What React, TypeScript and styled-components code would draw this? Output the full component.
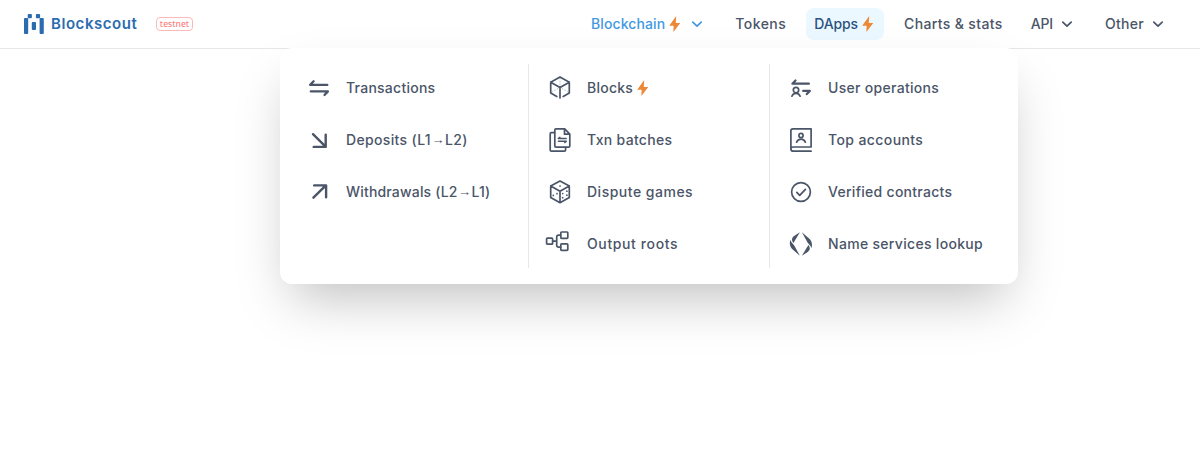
import React from 'react';
import styled, { createGlobalStyle, css } from 'styled-components';

const GlobalStyle = createGlobalStyle`
  *, *::before, *::after { box-sizing: border-box; }
  body {
    margin: 0;
    background: #fff;
    color: #4a5568;
    font-family: Inter, "Liberation Sans", sans-serif;
  }
`;

const Page = styled.div`
  min-height: 450px;
  overflow: hidden;
`;

const Header = styled.header`
  position: relative;
  display: flex;
  align-items: center;
  justify-content: space-between;
  height: 49px;
  padding: 0 24px 1px;
  border-bottom: 1px solid #e7e7e7;
`;

const Brand = styled.div`
  display: flex;
  align-items: center;
`;

const Wordmark = styled.span`
  width: 87px;
  margin-left: 7px;
  color: #2b6cb0;
  font-size: 15px;
  font-weight: 600;
  line-height: 20px;
  letter-spacing: 0.55px;
`;

const TestnetBadge = styled.span`
  display: flex;
  align-items: center;
  justify-content: center;
  width: 37px;
  height: 14px;
  margin-left: 18px;
  border: 1px solid #fdb9b9;
  border-radius: 4px;
  color: #fc8181;
  font-family: "Noto Sans", sans-serif;
  font-size: 8.6px;
  font-weight: 500;
  line-height: 12px;
`;

const Nav = styled.nav`
  display: flex;
  gap: 12px;
`;

const NavItem = styled.a<{ $variant?: 'open' | 'highlight' }>`
  display: flex;
  align-items: center;
  height: 32px;
  padding: 0 8px;
  border-radius: 8px;
  ${({ $variant }) => $variant === 'open' && css`color: #4299e1;`}
  ${({ $variant }) => $variant === 'highlight' && css`
    color: #2c5282;
    background: #ebf8ff;
  `}
`;

const Label = styled.span<{ $tracking?: number }>`
  font-size: 14px;
  font-weight: 500;
  line-height: 20px;
  letter-spacing: ${({ $tracking = 0.4 }) => $tracking}px;
  white-space: nowrap;
`;

const LayerArrow = styled.span`
  display: inline-block;
  width: 14px;
  font-family: "Liberation Sans", sans-serif;
  font-size: 13px;
  font-weight: 400;
  line-height: 1;
  letter-spacing: 0;
  text-align: center;
  vertical-align: 1px;
`;

const Menu = styled.div`
  position: absolute;
  top: 48px;
  left: 280px;
  display: grid;
  grid-template-columns: 232px 241px 233px;
  width: 738px;
  padding: 16px;
  border-radius: 12px;
  background: #fff;
  box-shadow: 0 25px 50px -12px rgba(0, 0, 0, 0.25);
`;

const MenuColumn = styled.ul`
  display: flex;
  flex-direction: column;
  gap: 4px;
  margin: 0;
  padding: 0;
  list-style: none;
  & + & {
    padding-left: 8px;
    border-left: 1px solid #e7e7e7;
  }
`;

const MenuItem = styled.li`
  display: flex;
  align-items: center;
  height: 48px;
  padding-left: 8px;
`;

const MenuIcon = styled.svg`
  flex: none;
  width: 30px;
  height: 30px;
  margin-right: 12px;
  fill: none;
  stroke: currentColor;
  stroke-width: 1.7;
  stroke-linecap: round;
  stroke-linejoin: round;
`;

const BoltSvg = styled.svg`
  flex: none;
  width: 18px;
  height: 18px;
  fill: #ed8936;
`;

const ChevronSvg = styled.svg`
  flex: none;
  width: 20px;
  height: 20px;
  margin-left: 4px;
  fill: none;
  stroke: currentColor;
  stroke-width: 1.7;
  stroke-linecap: round;
  stroke-linejoin: round;
`;

const Bolt = () => (
  <BoltSvg viewBox="0 0 18 18">
    <path d="M11.2 1 4.2 10.7h4.4L8.4 17 15.3 8h-4.5z" />
  </BoltSvg>
);

const Chevron = () => (
  <ChevronSvg viewBox="0 0 20 20">
    <path d="M5.8 8.1 10 12.2l4.2-4.1" />
  </ChevronSvg>
);

const Logo = () => (
  <svg width="20" height="20" viewBox="0 0 20 20" fill="#2b6cb0">
    <rect x="0" y="4" width="4.2" height="16" rx="0.9" />
    <rect x="3.7" y="0" width="4.2" height="4.2" rx="0.9" />
    <rect x="11.9" y="0" width="4.2" height="4.2" rx="0.9" />
    <rect x="15.6" y="4" width="4.2" height="16" rx="0.9" />
    <rect x="7.8" y="8" width="4.2" height="8" rx="0.9" />
  </svg>
);

const icons = {
  transactions: <path strokeWidth="2.3" d="M23.3 11.9H6.2l3.4-3.6M6.8 18.4h17.1l-3.4 3.6" />,
  deposits: <path strokeWidth="2.4" d="m9 9.2 12.3 12.2M9.7 21.9h12V9.6" />,
  withdrawals: <path strokeWidth="2.4" d="M9.4 20.7 21.6 8.6M10.2 8.4h11.9v11.8" />,
  blocks: (
    <>
      <path d="M11.8 23.5 5.7 20V9.2L15 4l9.3 5.2V20l-6.1 3.5M5.7 9.2 15 14.4l9.3-5.2M15 14.4V25" />
      <path strokeWidth="0.6" strokeDasharray="1 2" opacity="0.6" d="M15 5v7M7 19l6-3.5M23 19l-6-3.5" />
    </>
  ),
  batches: (
    <>
      <path d="M9.8 5.1c0-.7.5-1.2 1.2-1.2h8.7l5.1 5.2v11.8c0 .7-.5 1.2-1.2 1.2H11c-.7 0-1.2-.5-1.2-1.2zM19.5 4v5.2h5.2" />
      <path d="M9.5 7.7H6.4c-.7 0-1.2.5-1.2 1.2v16c0 .7.5 1.2 1.2 1.2h13c.7 0 1.2-.5 1.2-1.2v-2.4" />
      <path strokeWidth="1.4" d="M21.2 13.5h-8l1.7-1.3M13.4 16.3h8l-1.7 1.3" />
    </>
  ),
  dispute: (
    <>
      <path d="M15 3.9 24.3 9v11.5L15 25.7l-9.3-5.2V9zM5.7 9l9.3 5.3L24.3 9M15 14.3v11.2" />
      <path d="M15 9h.1M8.3 18.4h0M12 16.7h0M17.7 16.5h0M17.7 20.7h0M21.9 14.2h0M21.9 18.2h0" />
    </>
  ),
  roots: (
    <>
      <rect x="1.6" y="9.2" width="6" height="6" rx="0.8" />
      <rect x="15.8" y="3" width="7" height="6.4" rx="0.8" />
      <rect x="15.8" y="14.9" width="7" height="6.4" rx="0.8" />
      <path d="M7.8 12.2h4M15.6 6.2h-2c-1.1 0-1.9.8-1.9 1.9v8.1c0 1.1.8 1.9 1.9 1.9h2" />
    </>
  ),
  userOps: (
    <>
      <path strokeWidth="2.2" d="M22.9 10.7H6.4l3.1-3.2M17.2 17.9h6.6l-3 3.2" />
      <circle cx="10" cy="17.1" r="2.7" />
      <path d="M5.9 23.2c.7-1.9 2.1-2.9 4.1-2.9s3.4 1 4.1 2.9" />
    </>
  ),
  accounts: (
    <>
      <path d="M25.1 26.2H7.3c-1.4 0-2.4-1-2.4-2.3V5.8c0-1.1.9-2 2-2h18.2V22H7.3c-1.4 0-2.4.9-2.4 2" />
      <circle cx="15" cy="10.4" r="2.1" />
      <path d="M10.6 17.2c.8-2 2.3-3.1 4.4-3.1s3.6 1.1 4.4 3.1" />
    </>
  ),
  verified: (
    <>
      <circle cx="15" cy="15" r="9.4" />
      <path d="m10.8 15.4 2.9 2.9 5.7-6" />
    </>
  ),
  names: (
    <g fill="currentColor" stroke="none">
      <path d="M13.9 3.2 7.4 13.9C6 12.2 5.6 10.2 6.4 8.900c.4-.8 1-1.300 1.700-1.900z" />
      <path d="M4.4 10.800c-.8 2.400-.8 4.800.2 7 .5 1.100 1.200 2 2.100 2.700l7.200 6.200-5.800-10.400C6.700 14.600 5 13.400 4.400 10.800z" />
      <path d="m15.900 26.800 6.500-10.700c1.400 1.700 1.800 3.700 1 5-.4.800-1 1.300-1.700 1.900z" />
      <path d="M25.400 19.200c.8-2.400.8-4.800-.2-7-.5-1.100-1.200-2-2.100-2.700l-7.200-6.200 5.800 10.400c1.400 1.700 3.100 2.900 3.700 5.500z" />
    </g>
  ),
};

type Entry = {
  icon: keyof typeof icons;
  label: React.ReactNode;
  tracking?: number;
  bolt?: boolean;
};

const columns: Entry[][] = [
  [
    { icon: 'transactions', label: 'Transactions', tracking: 0.25 },
    { icon: 'deposits', label: <>Deposits (L1<LayerArrow>→</LayerArrow>L2)</>, tracking: 0.35 },
    { icon: 'withdrawals', label: <>Withdrawals (L2<LayerArrow>→</LayerArrow>L1)</>, tracking: 0.18 },
  ],
  [
    { icon: 'blocks', label: 'Blocks', tracking: 0.25, bolt: true },
    { icon: 'batches', label: 'Txn batches', tracking: 0.3 },
    { icon: 'dispute', label: 'Dispute games', tracking: 0.5 },
    { icon: 'roots', label: 'Output roots', tracking: 0.62 },
  ],
  [
    { icon: 'userOps', label: 'User operations', tracking: 0.3 },
    { icon: 'accounts', label: 'Top accounts' },
    { icon: 'verified', label: 'Verified contracts', tracking: 0.28 },
    { icon: 'names', label: 'Name services lookup', tracking: 0.31 },
  ],
];

export default function App() {
  return (
    <Page>
      <GlobalStyle />
      <Header>
        <Brand>
          <Logo />
          <Wordmark>Blockscout</Wordmark>
          <TestnetBadge>testnet</TestnetBadge>
        </Brand>
        <Nav>
          <NavItem $variant="open"><Label $tracking={0.1}>Blockchain</Label><Bolt /><Chevron /></NavItem>
          <NavItem><Label $tracking={0.47}>Tokens</Label></NavItem>
          <NavItem $variant="highlight"><Label $tracking={-0.12}>DApps</Label><Bolt /></NavItem>
          <NavItem><Label $tracking={0.36}>Charts &amp; stats</Label></NavItem>
          <NavItem><Label $tracking={-0.15}>API</Label><Chevron /></NavItem>
          <NavItem><Label $tracking={0.3}>Other</Label><Chevron /></NavItem>
        </Nav>
        <Menu>
          {columns.map((entries, index) => (
            <MenuColumn key={index}>
              {entries.map(({ icon, label, tracking, bolt }) => (
                <MenuItem key={icon}>
                  <MenuIcon viewBox="0 0 30 30">{icons[icon]}</MenuIcon>
                  <Label $tracking={tracking}>{label}</Label>
                  {bolt && <Bolt />}
                </MenuItem>
              ))}
            </MenuColumn>
          ))}
        </Menu>
      </Header>
    </Page>
  );
}
